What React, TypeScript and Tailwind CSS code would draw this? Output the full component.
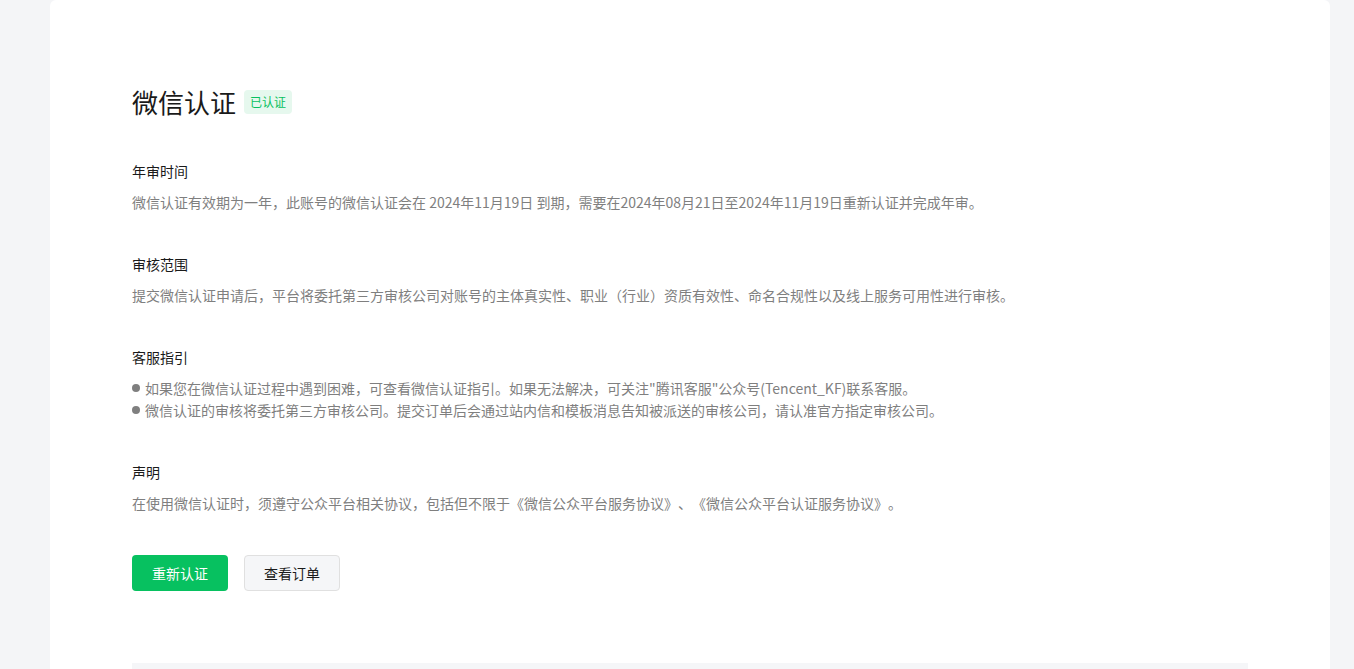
const sections = [
  {
    title: '年审时间',
    lines: ['微信认证有效期为一年，此账号的微信认证会在 2024年11月19日 到期，需要在2024年08月21日至2024年11月19日重新认证并完成年审。'],
  },
  {
    title: '审核范围',
    lines: ['提交微信认证申请后，平台将委托第三方审核公司对账号的主体真实性、职业（行业）资质有效性、命名合规性以及线上服务可用性进行审核。'],
  },
  {
    title: '客服指引',
    bullets: [
      '如果您在微信认证过程中遇到困难，可查看微信认证指引。如果无法解决，可关注"腾讯客服"公众号(Tencent_KF)联系客服。',
      '微信认证的审核将委托第三方审核公司。提交订单后会通过站内信和模板消息告知被派送的审核公司，请认准官方指定审核公司。',
    ],
  },
  {
    title: '声明',
    lines: ['在使用微信认证时，须遵守公众平台相关协议，包括但不限于《微信公众平台服务协议》、《微信公众平台认证服务协议》。'],
  },
];

function Section({ title, lines, bullets }: { title: string; lines?: string[]; bullets?: string[] }) {
  return (
    <div className="mt-[41px]">
      <h3 className="text-[14px] leading-[20px] text-[#1a1a1a]">{title}</h3>
      <div className="mt-[10px] text-[14px] leading-[22px] text-[#7f7f7f]">
        {lines?.map((l, i) => <p key={i}>{l}</p>)}
        {bullets?.map((b, i) => (
          <p key={i} className="flex items-center">
            <span className="mr-[5px] inline-block h-[8px] w-[8px] rounded-full bg-[#7f7f7f]"></span>
            <span>{b}</span>
          </p>
        ))}
      </div>
    </div>
  );
}

export default function App() {
  return (
    <div
      className="h-[669px] overflow-hidden bg-[#f4f5f7] pl-[50px] pr-[24px] [text-spacing-trim:space-all]"
      style={{ fontFamily: '"Noto Sans CJK SC", "Noto Sans", sans-serif' }}
    >
      <div className="h-full rounded-t-md bg-white pl-[82px] pr-[82px] pt-[84px]">
        <div className="flex items-center gap-2">
          <h1 className="text-[26px] leading-[36px] text-[#1a1a1a]">微信认证</h1>
          <span className="rounded-sm bg-[#e6f8ee] px-[6px] text-[12px] leading-[24px] text-[#07c160]">已认证</span>
        </div>

        {sections.map((s) => (
          <Section key={s.title} {...s} />
        ))}

        <div className="mt-[41px] flex gap-4">
          <button className="h-9 w-24 rounded bg-[#07c160] text-[14px] text-white">重新认证</button>
          <button className="h-9 w-24 rounded border border-[#e0e0e0] bg-[#f5f6f8] text-[14px] text-[#1a1a1a]">查看订单</button>
        </div>

        <div className="mt-[72px] h-10 w-[1116px] bg-[#f5f6f8]"></div>
      </div>
    </div>
  );
}
